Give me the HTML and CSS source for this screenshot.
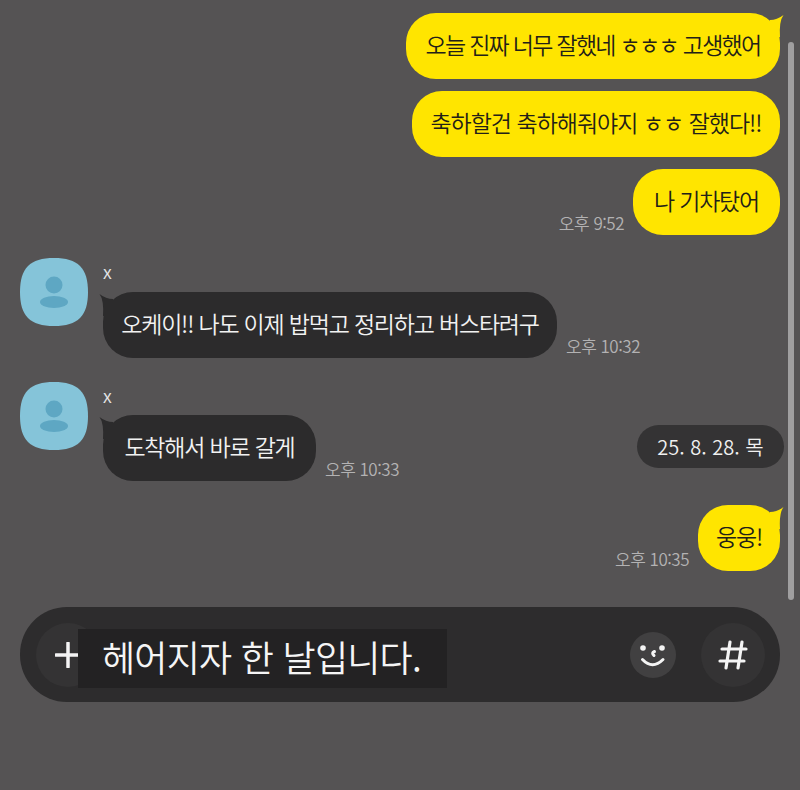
FILE: index.html
```html
<!DOCTYPE html>
<html lang="ko">
<head>
<meta charset="utf-8">
<title>채팅</title>
<link rel="stylesheet" href="styles.css">
</head>
<body>
<div class="screen">
  <main class="chat">
    <div class="row mine">
      <div class="bubble yellow w1">오늘 진짜 너무 잘했네 ㅎㅎㅎ 고생했어<svg class="tail tail-r" viewBox="0 0 20 24"><path d="M6 7Q13 7 19.500 2Q15 8 16 24L6 24Z"/></svg></div>
    </div>
    <div class="row mine gap-s">
      <div class="bubble yellow w2">축하할건 축하해줘야지 ㅎㅎ 잘했다!!</div>
    </div>
    <div class="row mine gap-s">
      <span class="time">오후 9:52</span>
      <div class="bubble yellow w3">나 기차탔어</div>
    </div>
    <div class="group first">
      <svg class="avatar" viewBox="0 0 68 68"><path class="av-bg" d="M34 0C58 0 68 10 68 34S58 68 34 68 0 58 0 34 10 0 34 0Z"/><circle class="av-fg" cx="34" cy="27" r="8.500"/><ellipse class="av-fg" cx="34" cy="44" rx="14" ry="6"/></svg>
      <div class="body">
        <div class="name">x</div>
        <div class="line">
          <div class="bubble dark w4">오케이!! 나도 이제 밥먹고 정리하고 버스타려구<svg class="tail tail-l" viewBox="0 0 20 24"><path d="M14 7Q7 7 .5 2Q5 8 4 24L14 24Z"/></svg></div>
          <span class="time">오후 10:32</span>
        </div>
      </div>
    </div>
    <div class="group second">
      <svg class="avatar" viewBox="0 0 68 68"><path class="av-bg" d="M34 0C58 0 68 10 68 34S58 68 34 68 0 58 0 34 10 0 34 0Z"/><circle class="av-fg" cx="34" cy="27" r="8.500"/><ellipse class="av-fg" cx="34" cy="44" rx="14" ry="6"/></svg>
      <div class="body">
        <div class="name">x</div>
        <div class="line">
          <div class="bubble dark w5">도착해서 바로 갈게<svg class="tail tail-l" viewBox="0 0 20 24"><path d="M14 7Q7 7 .5 2Q5 8 4 24L14 24Z"/></svg></div>
          <span class="time">오후 10:33</span>
        </div>
      </div>
    </div>
    <div class="row mine gap-l">
      <span class="time">오후 10:35</span>
      <div class="bubble yellow w6">웅웅!<svg class="tail tail-r" viewBox="0 0 20 24"><path d="M6 7Q13 7 19.500 2Q15 8 16 24L6 24Z"/></svg></div>
    </div>
    <div class="date">25. 8. 28. 목</div>
    <div class="scrollbar"></div>
  </main>
  <footer class="composer">
    <div class="round plus"><svg width="26" height="26" viewBox="0 0 26 26"><path d="M13 1V25M1 13H25"/></svg></div>
    <div class="draft">헤어지자 한 날입니다.</div>
    <div class="round smile"><svg width="46" height="46" viewBox="0 0 46 46"><circle class="dot" cx="13" cy="16" r="2.800"/><circle class="dot" cx="32" cy="16" r="2.800"/><path d="M24.500 19.500Q21 21 24 23.500"/><path d="M12.500 27.500Q22.500 38 33 27.500"/></svg></div>
    <div class="round hash"><svg width="30" height="30" viewBox="0 0 30 30"><path d="M12 2L8 28M24 2L20 28M4 9H28M2 21H26"/></svg></div>
  </footer>
</div>
</body>
</html>
```
FILE: styles.css
```css
* { box-sizing: border-box; }
html, body { margin: 0; padding: 0; }
body {
  width: 800px;
  height: 790px;
  overflow: hidden;
  background: #555354;
  font-family: "Noto Sans CJK KR", "Noto Sans", sans-serif;
}
.screen { width: 800px; height: 790px; display: flex; flex-direction: column; }
.chat {
  position: relative;
  height: 607px;
  flex: none;
  padding: 13px 20px 0;
  display: flex;
  flex-direction: column;
}
.row { display: flex; align-items: flex-end; gap: 9px; }
.mine { justify-content: flex-end; }
.gap-s { margin-top: 12px; }
.gap-l { margin-top: 24px; }
.bubble {
  position: relative;
  height: 66px;
  padding-bottom: 4px;
  border-radius: 30px;
  display: flex;
  align-items: center;
  justify-content: center;
  font-size: 23px;
  font-weight: 350;
  line-height: 1;
  white-space: nowrap;
  letter-spacing: -1.2px;
}
.yellow { background: #ffe500; color: #222018; }
.dark { background: #2c2b2c; color: #f2f2f2; }
.w1 { width: 374px; letter-spacing: -1.7px; }
.w2 { width: 368px; letter-spacing: -1px; }
.w3 { width: 147px; }
.w4 { width: 454px; }
.w5 { width: 213px; }
.w6 { width: 82px; }
.tail { position: absolute; width: 20px; height: 24px; top: 0; }
.tail-r { right: -4px; fill: #ffe500; }
.tail-l { left: -4px; fill: #2c2b2c; }
.time { color: #b3b2b3; font-size: 17px; font-weight: 350; line-height: 20px; letter-spacing: -0.5px; white-space: nowrap; padding-bottom: 2px; }
.group { display: flex; gap: 15px; margin-top: 24px; }
.group.first { margin-top: 23px; }
.avatar { width: 68px; height: 68px; flex: none; }
.av-bg { fill: #85c4d9; }
.av-fg { fill: #5ea7c3; }
.body { display: flex; flex-direction: column; }
.name { height: 34px; color: #e6e6e6; font-size: 18px; font-weight: 350; line-height: 26px; }
.second .name { height: 33px; }
.line { display: flex; align-items: flex-end; gap: 9px; }
.date {
  position: absolute;
  left: 637px;
  top: 425px;
  width: 147px;
  height: 43px;
  border-radius: 22px;
  background: #343334;
  color: #f0f0f0;
  font-size: 20px;
  font-weight: 350;
  line-height: 43px;
  text-align: center;
}
.scrollbar {
  position: absolute;
  left: 788px;
  top: 42px;
  width: 6px;
  height: 558px;
  border-radius: 3px;
  background: #a09fa0;
}
.composer {
  position: relative;
  margin: 0 20px;
  height: 95px;
  border-radius: 47px;
  background: #2d2c2d;
  display: flex;
  align-items: center;
  padding: 0 15px 0 16px;
}
.round { border-radius: 50%; display: flex; align-items: center; justify-content: center; flex: none; }
.round svg { fill: none; stroke: #f4f4f4; stroke-linecap: round; }
.plus { width: 64px; height: 64px; background: #343334; margin-right: auto; }
.plus svg { stroke-width: 3.5; }
.smile { width: 46px; height: 46px; background: #414041; margin-right: 25px; }
.smile svg { stroke-width: 3; }
.smile .dot { fill: #f4f4f4; stroke: none; }
.hash { width: 64px; height: 64px; background: #343334; }
.hash svg { stroke-width: 3.2; }
.draft {
  position: absolute;
  left: 58px;
  top: 22px;
  width: 369px;
  height: 59px;
  padding-left: 24px;
  background: #232223;
  color: #f5f5f5;
  font-size: 36px;
  font-weight: 350;
  line-height: 55px;
  letter-spacing: -0.75px;
  white-space: nowrap;
}
```
